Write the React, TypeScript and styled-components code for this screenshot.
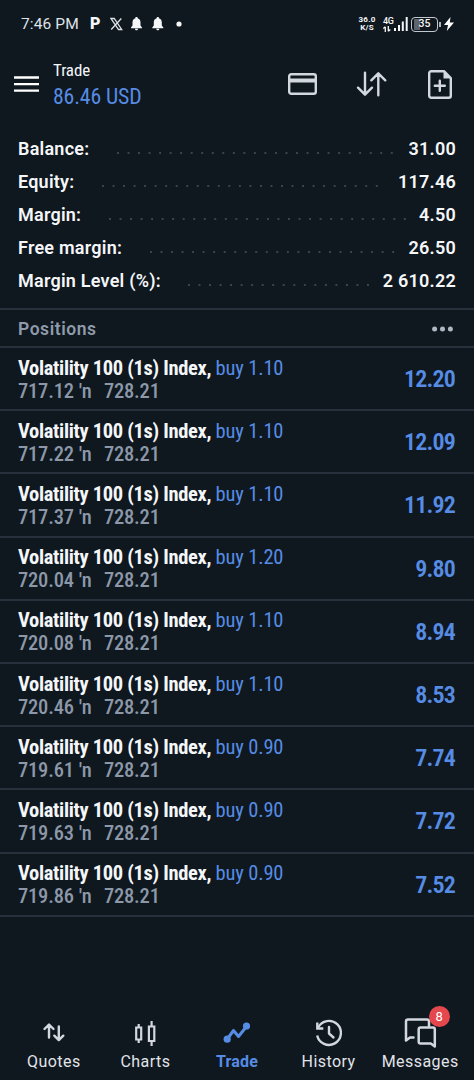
import React from 'react';
import styled, { createGlobalStyle } from 'styled-components';

const BLUE = '#568ce4';
const LINE = '#27303b';
const ICON = '#d3d8df';

const Global = createGlobalStyle`
  * { box-sizing: border-box; }
  body { margin: 0; background: #0f171f; color: #f4f6f8; font-family: Roboto, "Liberation Sans", sans-serif; }
`;

const Screen = styled.div`
  display: flex;
  flex-direction: column;
  height: 1080px;
  width: 474px;
  overflow: hidden;
  background: #0f171f;
`;

const StatusBar = styled.div`
  display: flex;
  align-items: center;
  height: 48px;
  padding: 0 20px 0 21px;
`;

const Clock = styled.span`
  font-size: 15.5px;
  letter-spacing: 0.12px;
  line-height: 20px;
  width: 69px;
  color: #dfe3e8;
  white-space: nowrap;
`;

const ParkingGlyph = styled.span`
  font-size: 16px;
  font-weight: 900;
  line-height: 20px;
  width: 20px;
`;

const Notices = styled.svg`
  display: block;
  width: 74px;
  height: 16px;
`;

const Spacer = styled.div`
  flex: 1;
`;

const Speed = styled.div`
  display: flex;
  flex-direction: column;
  align-items: center;
  width: 18px;
  margin-right: 7px;
  font-size: 8px;
  font-weight: 700;
  line-height: 8px;
  letter-spacing: 0.2px;
`;

const Network = styled.div`
  display: flex;
  flex-direction: column;
  width: 11px;
  font-size: 9px;
  font-weight: 500;
  line-height: 9px;
  letter-spacing: -0.3px;
`;

const Bars = styled.svg`
  display: block;
  width: 14px;
  height: 14px;
  margin-right: 3px;
`;

const Battery = styled.div`
  display: flex;
  align-items: center;
  justify-content: center;
  width: 27px;
  height: 15px;
  border: 1.5px solid #c3c8ce;
  border-radius: 4px;
  font-size: 10.5px;
  font-weight: 500;
  line-height: 12px;
  background: linear-gradient(90deg, #5d646c 0 6px, transparent 6px) 1px 0 / 100% 100% no-repeat content-box;
  padding: 1px;
`;

const BatteryNub = styled.div`
  width: 2px;
  height: 5px;
  margin: 0 3px 0 1px;
  background: #aeb4bb;
`;

const Header = styled.header`
  display: flex;
  align-items: center;
  height: 72px;
  padding: 0 22px 0 14px;
`;

const Titles = styled.div`
  flex: 1;
  margin-left: 14px;
  font-family: "Roboto Condensed", Roboto, sans-serif;
`;

const Title = styled.div`
  font-size: 17px;
  line-height: 24px;
  letter-spacing: -0.1px;
`;

const Profit = styled.div`
  padding-top: 1px;
  font-size: 21.8px;
  line-height: 28px;
  letter-spacing: -0.15px;
  color: ${BLUE};
`;

const Actions = styled.div`
  display: flex;
  align-items: center;
  gap: 40px;
`;

const Summary = styled.section`
  display: flex;
  flex-direction: column;
  height: 190px;
  padding: 12px 18px 0 18px;
  border-bottom: 2px solid ${LINE};
`;

const SummaryRow = styled.div`
  display: flex;
  height: 33px;
  align-items: center;
  font-size: 18px;
  font-weight: 600;
  letter-spacing: 0.23px;
  white-space: nowrap;
`;

const Leader = styled.div`
  flex: 1;
  height: 2px;
  margin: 8px 13px 0 27.500px;
  background: linear-gradient(90deg, #3b444e 0 1.8px, transparent 1.8px) 0 0 / 10.54px 2px repeat-x;
`;

const SectionHead = styled.div`
  display: flex;
  align-items: center;
  justify-content: space-between;
  height: 38px;
  padding: 2px 21px 0 18px;
  border-bottom: 2px solid ${LINE};
  font-size: 17.5px;
  font-weight: 600;
  letter-spacing: 0.55px;
  color: #8f9bab;
`;

const PositionRow = styled.div`
  display: flex;
  align-items: center;
  height: 63.2px;
  padding: 1px 19px 0 18px;
  border-bottom: 2px solid ${LINE};
  font-family: "Roboto Condensed", Roboto, sans-serif;
  white-space: nowrap;
`;

const Details = styled.div`
  flex: 1;
`;

const Symbol = styled.div`
  font-size: 20.5px;
  line-height: 23px;
  font-weight: 700;
  letter-spacing: -0.33px;
`;

const Side = styled.span`
  font-weight: 400;
  letter-spacing: -0.15px;
  color: ${BLUE};
`;

const Prices = styled.div`
  display: flex;
  font-size: 20.5px;
  line-height: 22px;
  letter-spacing: -0.2px;
  font-weight: 500;
  color: #8c98a8;
`;

const Mark = styled.span`
  margin: 0 12.5px 0 5px;
  letter-spacing: -0.3px;
`;

const Result = styled.div`
  font-size: 24px;
  font-weight: 600;
  letter-spacing: -0.8px;
  line-height: 30px;
  color: ${BLUE};
`;

const TabBar = styled.nav`
  display: grid;
  grid-template-columns: repeat(5, 1fr);
  height: 70px;
  padding: 0 8px;
`;

const Tab = styled.div<{ $active?: boolean }>`
  display: flex;
  flex-direction: column;
  align-items: center;
  color: ${p => (p.$active ? BLUE : '#e1e4e9')};
  font-size: 16px;
  font-weight: ${p => (p.$active ? 700 : 400)};
  letter-spacing: ${p => (p.$active ? 0.2 : 0.45)}px;
  line-height: 20px;
`;

const TabIcon = styled.div`
  position: relative;
  width: 40px;
  height: 42px;
  color: ${ICON};
`;

const Badge = styled.span`
  position: absolute;
  left: 28.5px;
  top: -4px;
  width: 21px;
  height: 21px;
  border-radius: 50%;
  background: #e4484c;
  color: #fff;
  font-size: 13px;
  line-height: 21px;
  letter-spacing: 0;
  text-align: center;
`;

const Svg = styled.svg`
  display: block;
  overflow: visible;
`;

const line = { fill: 'none', stroke: ICON, strokeWidth: 2.4, strokeLinecap: 'round', strokeLinejoin: 'round' } as const;

const bell = 'M5.5 0.5c.8 0 1.200.5 1.200 1.200 2 .6 2.800 2.200 2.800 4.200v3l1.500 2v.8H0v-.8l1.500-2v-3c0-2 .8-3.600 2.800-4.200C4.300 1 4.700.5 5.500.5zM4 12.300h3c0 1-.7 1.500-1.500 1.500S4 13.300 4 12.300z';

const summary = [
  ['Balance:', '31.00'],
  ['Equity:', '117.46'],
  ['Margin:', '4.50'],
  ['Free margin:', '26.50'],
  ['Margin Level (%):', '2 610.22'],
];

const positions = [
  ['1.10', '717.12', '12.20'],
  ['1.10', '717.22', '12.09'],
  ['1.10', '717.37', '11.92'],
  ['1.20', '720.04', '9.80'],
  ['1.10', '720.08', '8.94'],
  ['1.10', '720.46', '8.53'],
  ['0.90', '719.61', '7.74'],
  ['0.90', '719.63', '7.72'],
  ['0.90', '719.86', '7.52'],
];

const tabs = [
  {
    name: 'Quotes',
    icon: (
      <g {...line}>
        <path d="M15 27.500V15M10.500 19l4.500-4.500 4.500 4.500M24.800 16.500v13.500M20.300 25.700l4.500 4.500 4.500-4.500" />
      </g>
    ),
  },
  {
    name: 'Charts',
    icon: (
      <g {...line} strokeWidth={2.2} strokeLinecap="butt" strokeLinejoin="miter">
        <path d="M11.200 17.500h5v12h-5zM13.700 14v3.500M13.700 29.500V33M23.900 16.500h5.400v14.500h-5.400zM26.600 11v5.500M26.600 31v5" />
      </g>
    ),
  },
  {
    name: 'Trade',
    icon: (
      <g fill={BLUE} stroke={BLUE} strokeLinejoin="round">
        <path d="M10 29.500l6.500-9 5 6 8-10" fill="none" strokeWidth={3} />
        <circle cx="10.200" cy="29.200" r="3.600" stroke="none" />
        <circle cx="29.500" cy="16" r="3.600" stroke="none" />
      </g>
    ),
  },
  {
    name: 'History',
    icon: (
      <g {...line}>
        <path d="M9.200 17.500A12 12 0 1 1 8.200 25.500" strokeLinecap="butt" />
        <path d="M8.300 12.500v6h6" strokeLinecap="butt" strokeLinejoin="miter" />
        <path d="M20 17v6.500l4.500 4" />
      </g>
    ),
  },
  {
    name: 'Messages',
    icon: (
      <g {...line} strokeWidth={2.5}>
        <path d="M13.500 27.500H10l-4 3V11.500a2 2 0 0 1 2-2h19a2 2 0 0 1 2 2V16" />
        <path d="M20.500 17.500H33a1.800 1.800 0 0 1 1.800 1.800V36.500l-4-3H20.500a1.800 1.800 0 0 1-1.800-1.800V19.300a1.800 1.800 0 0 1 1.800-1.800z" />
      </g>
    ),
  },
];

export default function App() {
  return (
    <Screen>
      <Global />
      <StatusBar>
        <Clock>7:46 PM</Clock>
        <ParkingGlyph>P</ParkingGlyph>
        <Notices viewBox="0 0 74 16" fill="#f4f6f8">
          <path d="M1 2.500h3.200l7.500 11H8.500zM11.300 2.500L1.200 13.500" fill="none" stroke="#dfe3e8" strokeWidth="1.300" />
          <path d={bell} transform="translate(21 0.500)" />
          <path d={bell} transform="translate(42.300 0.500)" />
          <circle cx="69" cy="8" r="2.600" />
        </Notices>
        <Spacer />
        <Speed>
          <span>36.0</span>
          <span>K/S</span>
        </Speed>
        <Network>
          4G
          <svg width="8" height="6" viewBox="0 0 8 6" fill="none" stroke="#f4f6f8" strokeWidth="1.300">
            <path d="M2.300 6V.8M.3 2.600l2-1.800M5.300 0v5.200M7.300 3.400l-2 1.800" />
          </svg>
        </Network>
        <Bars viewBox="0 0 14 14" fill="#f4f6f8">
          <path d="M0 11h2v3H0zM4 8h2v6H4zM7.800 4.500h2V14h-2zM11.700 0h2v14h-2z" />
        </Bars>
        <Battery>35</Battery>
        <BatteryNub />
        <Svg width="10" height="14" viewBox="0 0 10 14">
          <path d="M6.500 0L0 8h4L2.800 14 10 5.500H5.800z" fill="#fff" />
        </Svg>
      </StatusBar>

      <Header>
        <Svg width="25" height="16" viewBox="0 0 25 16">
          <path d="M0 1.500h25M0 8.200h25M0 14.700h25" stroke="#fff" strokeWidth="2.300" />
        </Svg>
        <Titles>
          <Title>Trade</Title>
          <Profit>86.46 USD</Profit>
        </Titles>
        <Actions>
          <Svg width="29" height="22" viewBox="0 0 29 22">
            <rect x="1.200" y="1.200" width="26.600" height="19.600" rx="2" {...line} />
            <path d="M1.500 7.500h26" stroke={ICON} strokeWidth="4" />
          </Svg>
          <Svg width="31" height="24" viewBox="0 0 31 24">
            <path d="M8 .8v21.500M1 15.700l7 7 7-7M21.300 23.200V1.700M14.300 8.300l7-7 7 7" {...line} />
          </Svg>
          <Svg width="24" height="29" viewBox="0 0 24 29">
            <path d="M3.200 1.200H16l6.800 6.800v17.800a2 2 0 0 1-2 2H3.200a2 2 0 0 1-2-2V3.200a2 2 0 0 1 2-2zM11.800 10.800v10M6.800 15.800h10" {...line} />
            <path d="M15.500 1v7.500H23z" fill={ICON} />
          </Svg>
        </Actions>
      </Header>

      <Summary>
        {summary.map(([label, value]) => (
          <SummaryRow key={label}>
            <span>{label}</span>
            <Leader />
            <span>{value}</span>
          </SummaryRow>
        ))}
      </Summary>

      <SectionHead>
        Positions
        <Svg width="21" height="6" viewBox="0 0 21 6" fill="#aeb7c2">
          <circle cx="2.600" cy="3" r="2.500" />
          <circle cx="10.500" cy="3" r="2.500" />
          <circle cx="18.400" cy="3" r="2.500" />
        </Svg>
      </SectionHead>

      {positions.map(([lots, open, result]) => (
        <PositionRow key={open}>
          <Details>
            <Symbol>
              Volatility 100 (1s) Index, <Side>buy {lots}</Side>
            </Symbol>
            <Prices>
              {open}
              <Mark>′n</Mark>
              728.21
            </Prices>
          </Details>
          <Result>{result}</Result>
        </PositionRow>
      ))}

      <Spacer />
      <TabBar>
        {tabs.map(({ name, icon }) => (
          <Tab key={name} $active={name === 'Trade'}>
            <TabIcon>
              <Svg width="40" height="37" viewBox="0 0 40 37">
                {icon}
              </Svg>
              {name === 'Messages' && <Badge>8</Badge>}
            </TabIcon>
            {name}
          </Tab>
        ))}
      </TabBar>
    </Screen>
  );
}
